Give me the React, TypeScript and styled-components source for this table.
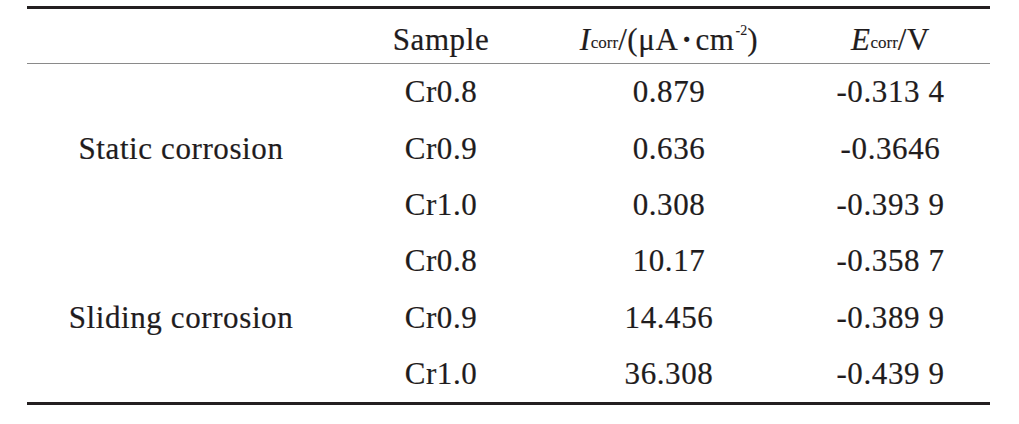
import React from "react";
import styled, { createGlobalStyle } from "styled-components";

const Global = createGlobalStyle`
  html, body { margin: 0; padding: 0; background: #ffffff; }
  body { font-family: "Liberation Serif", "Times New Roman", serif; color: #1f1c1d; }
`;

const Page = styled.div`
  width: 1019px;
  height: 424px;
  padding: 6px 0 0 27px;
  box-sizing: border-box;
`;

const Table = styled.div`
  width: 963px;
  display: grid;
  grid-template-columns: 308px 212px 244px 199px;
  grid-template-rows: 55px repeat(6, 56.4px);
  border-top: 3px solid #231f20;
  border-bottom: 3px solid #231f20;
  font-size: 31px;
  letter-spacing: 0.6px;
  -webkit-text-stroke: 0.2px #1f1c1d;
`;

const HeadCell = styled.div`
  display: flex;
  align-items: center;
  justify-content: center;
  padding-top: 7px;
  box-sizing: border-box;
  border-bottom: 1.5px solid #8a8a8a;
  white-space: nowrap;
`;

const Cell = styled.div<{ $span?: number }>`
  display: flex;
  align-items: center;
  justify-content: center;
  white-space: nowrap;
  grid-row: ${(p) => (p.$span ? `span ${p.$span}` : "auto")};
`;

const Ital = styled.span`
  font-style: italic;
`;

const Sub = styled.span`
  font-size: 17px;
  letter-spacing: 0;
  position: relative;
  top: 3px;
  margin-right: 0;
  -webkit-text-stroke: 0.1px #1f1c1d;
`;

const Sup = styled.span`
  font-size: 14px;
  letter-spacing: 0;
  position: relative;
  top: -9px;
  margin-left: 1px;
  -webkit-text-stroke: 0.1px #1f1c1d;
`;

const Dot = styled.span`
  margin: 0 3px;
  font-weight: bold;
`;

type Row = { sample: string; i: string; e: string };
const groups: { name: string; rows: Row[] }[] = [
  {
    name: "Static corrosion",
    rows: [
      { sample: "Cr0.8", i: "0.879", e: "-0.313 4" },
      { sample: "Cr0.9", i: "0.636", e: "-0.3646" },
      { sample: "Cr1.0", i: "0.308", e: "-0.393 9" },
    ],
  },
  {
    name: "Sliding corrosion",
    rows: [
      { sample: "Cr0.8", i: "10.17", e: "-0.358 7" },
      { sample: "Cr0.9", i: "14.456", e: "-0.389 9" },
      { sample: "Cr1.0", i: "36.308", e: "-0.439 9" },
    ],
  },
];

export default function App() {
  return (
    <>
      <Global />
      <Page>
        <Table>
          <HeadCell />
          <HeadCell>Sample</HeadCell>
          <HeadCell>
            <Ital>I</Ital>
            <Sub>corr</Sub>/(μA<Dot>·</Dot>cm<Sup>-2</Sup>)
          </HeadCell>
          <HeadCell>
            <Ital>E</Ital>
            <Sub>corr</Sub>/V
          </HeadCell>
          {groups.map((g) =>
            g.rows.map((r, idx) => (
              <React.Fragment key={g.name + idx}>
                {idx === 0 && <Cell $span={3}>{g.name}</Cell>}
                <Cell style={{ gridColumn: 2 }}>{r.sample}</Cell>
                <Cell>{r.i}</Cell>
                <Cell>{r.e}</Cell>
              </React.Fragment>
            ))
          )}
        </Table>
      </Page>
    </>
  );
}
